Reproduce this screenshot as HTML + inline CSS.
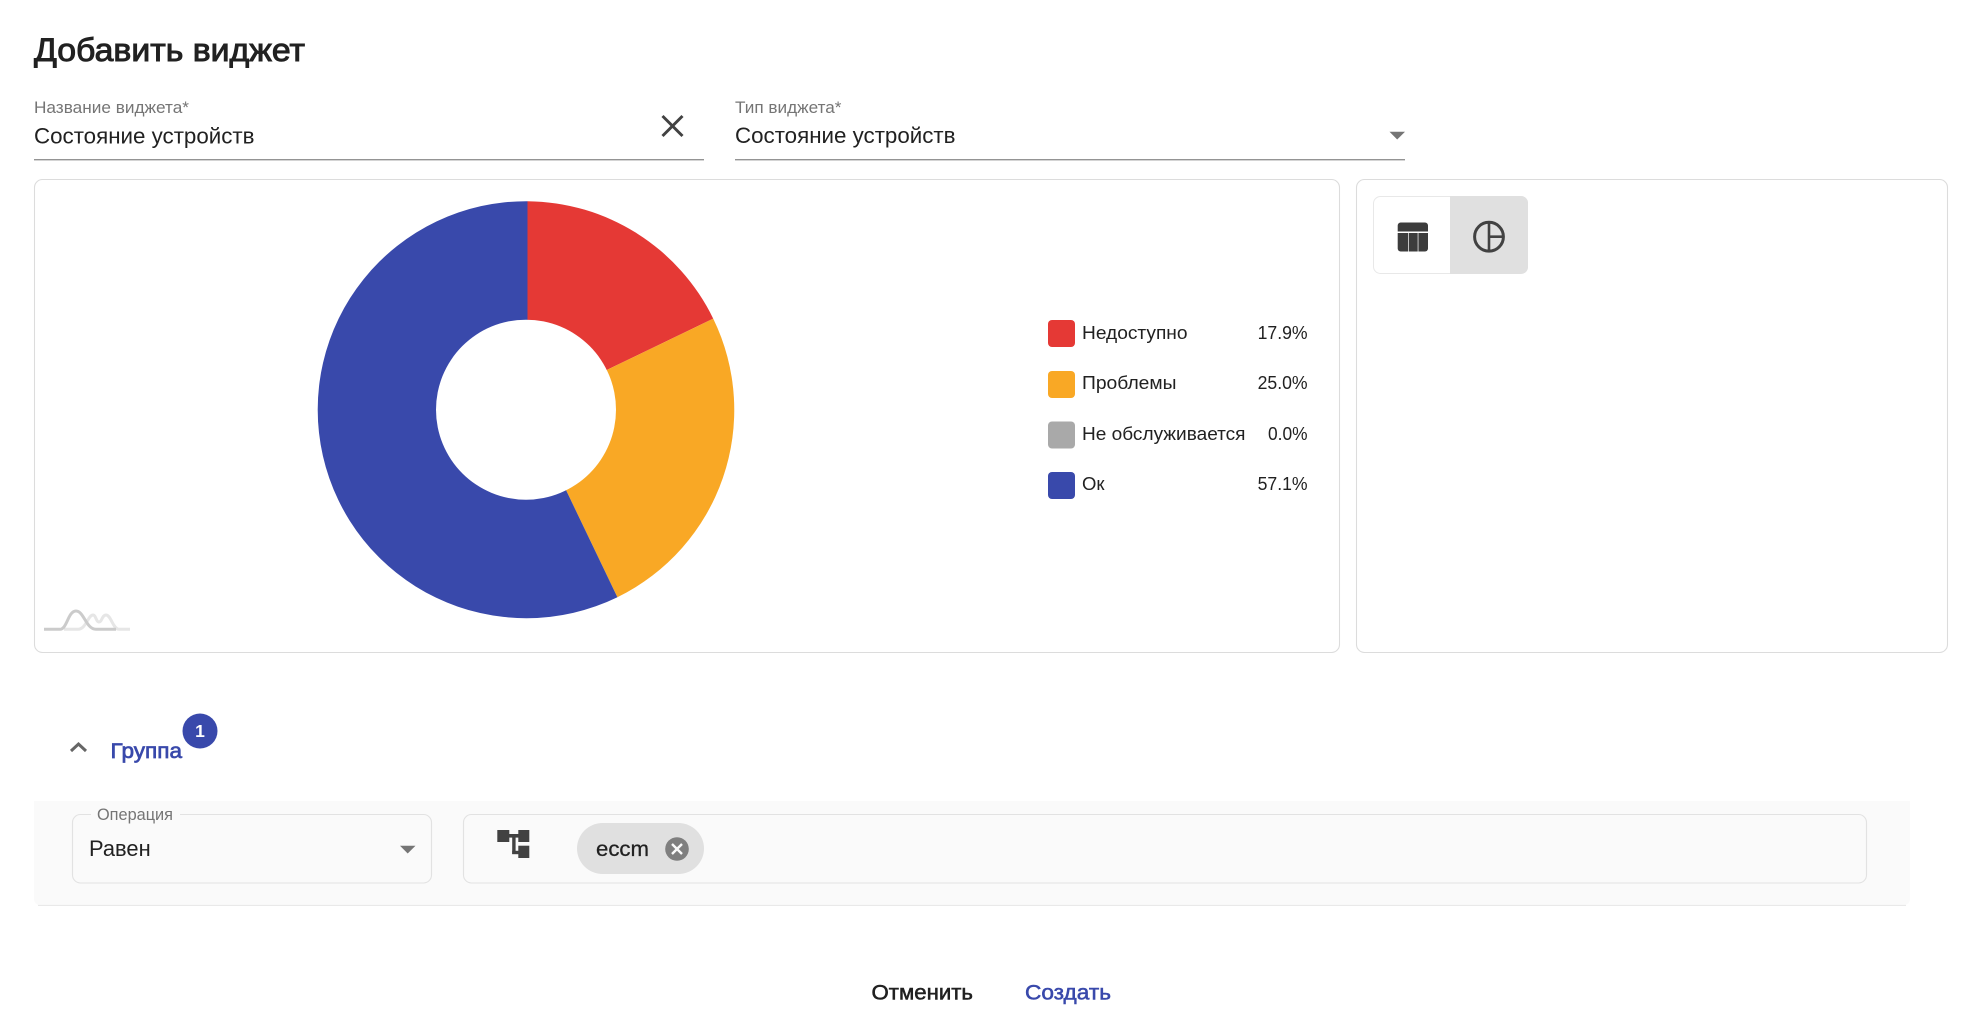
<!DOCTYPE html>
<html lang="ru">
<head>
<meta charset="utf-8">
<title>Добавить виджет</title>
<style>
html,body{margin:0;padding:0;background:#fff;width:1983px;height:1034px;overflow:hidden}
svg{display:block;position:absolute;left:0;top:0}
text{font-family:"Liberation Sans",sans-serif;white-space:pre}
</style>
</head>
<body>
<svg width="1983" height="1034" viewBox="0 0 1983 1034" xmlns="http://www.w3.org/2000/svg">
  <!-- Title -->
  <text x="34" y="61" font-size="32" fill="#212121" stroke="#212121" stroke-width=".95" textLength="271" lengthAdjust="spacingAndGlyphs">Добавить виджет</text>

  <!-- Name field -->
  <text x="34" y="113" font-size="16.5" fill="#757575" textLength="155" lengthAdjust="spacingAndGlyphs">Название виджета*</text>
  <text x="34" y="143.6" font-size="22" fill="#212121" textLength="220.5" lengthAdjust="spacingAndGlyphs">Состояние устройств</text>
  <path d="M662.5 116 L682.5 136 M682.5 116 L662.5 136" stroke="#424242" stroke-width="2.9" fill="none"/>
  <rect x="34" y="159" width="670" height="1.4" fill="#949494"/>

  <!-- Type field -->
  <text x="735" y="113" font-size="16.5" fill="#757575" textLength="106.5" lengthAdjust="spacingAndGlyphs">Тип виджета*</text>
  <text x="735" y="143" font-size="22" fill="#212121" textLength="220.5" lengthAdjust="spacingAndGlyphs">Состояние устройств</text>
  <path d="M1389.5 131.7 H1405 L1397.2 139.5 Z" fill="#757575"/>
  <rect x="735" y="159" width="670" height="1.4" fill="#949494"/>

  <!-- Chart panel -->
  <rect x="34.5" y="179.5" width="1305" height="473" rx="8" ry="8" fill="#fff" stroke="#dcdcdc" stroke-width="1.1"/>
  <path d="M527.5 201.2 A208.5 208.5 0 0 1 713.2 318.6 L607.2 369.8 L566.4 490.9 L527.5 409.7 Z" fill="#e53935"/>
  <path d="M713.2 318.6 A208.5 208.5 0 0 1 617.4 597.2 L566.4 490.9 L527.5 409.7 L607.2 369.8 Z" fill="#f9a825"/>
  <path d="M617.4 597.2 A208.5 208.5 0 1 1 527.5 201.2 L527.5 409.7 L566.4 490.9 Z" fill="#3949ab"/>
  <circle cx="526" cy="409.7" r="90" fill="#fff"/>

  <!-- Legend -->
  <rect x="1048" y="320" width="27" height="27" rx="4" fill="#e53935"/>
  <rect x="1048" y="371" width="27" height="27" rx="4" fill="#f9a825"/>
  <rect x="1048" y="421.5" width="27" height="27" rx="4" fill="#a9a9a9"/>
  <rect x="1048" y="472" width="27" height="27" rx="4" fill="#3949ab"/>
  <g font-size="18.5" fill="#212121">
    <text x="1082" y="339" textLength="105.5" lengthAdjust="spacingAndGlyphs">Недоступно</text>
    <text x="1082" y="389" textLength="94.5" lengthAdjust="spacingAndGlyphs">Проблемы</text>
    <text x="1082" y="440" textLength="163.5" lengthAdjust="spacingAndGlyphs">Не обслуживается</text>
    <text x="1082" y="490" textLength="22.5" lengthAdjust="spacingAndGlyphs">Ок</text>
    <text x="1257.6" y="339" textLength="50" lengthAdjust="spacingAndGlyphs">17.9%</text>
    <text x="1257.6" y="389" textLength="50" lengthAdjust="spacingAndGlyphs">25.0%</text>
    <text x="1268" y="440" textLength="39.5" lengthAdjust="spacingAndGlyphs">0.0%</text>
    <text x="1257.6" y="490" textLength="50" lengthAdjust="spacingAndGlyphs">57.1%</text>
  </g>

  <!-- Watermark -->
  <path d="M64 629.3 H78 C86 629.3 88 615 93 615 C96 615 96 622 99 622 C102 622 102 615 106 615 C111 615 113 629.3 119 629.3 H130" fill="none" stroke="#e6e6e6" stroke-width="3"/>
  <path d="M44 629.3 H60 C67 629.3 68 611 76 611 C84 611 86 629.3 96 629.3 H116" fill="none" stroke="#cbcbcb" stroke-width="3"/>

  <!-- Side panel -->
  <rect x="1356.5" y="179.5" width="591" height="473" rx="8" ry="8" fill="#fff" stroke="#dcdcdc" stroke-width="1.1"/>
  <rect x="1373.5" y="196.5" width="154" height="77" rx="7" fill="#fff" stroke="#e8e8e8" stroke-width="1"/>
  <path d="M1450 196 H1521 A7 7 0 0 1 1528 203 V267 A7 7 0 0 1 1521 274 H1450 Z" fill="#e0e0e0"/>
  <path d="M1400.7 222.5 H1425 A3 3 0 0 1 1428 225.5 V231.5 H1397.7 V225.5 A3 3 0 0 1 1400.7 222.5 Z" fill="#3c3c3c"/>
  <path d="M1397.7 233 H1408 V251.5 H1400.7 A3 3 0 0 1 1397.7 248.5 Z" fill="#3c3c3c"/>
  <rect x="1408.7" y="233" width="9" height="18.5" fill="#3c3c3c"/>
  <path d="M1418.4 233 H1428 V248.5 A3 3 0 0 1 1425 251.5 H1418.4 Z" fill="#3c3c3c"/>
  <circle cx="1489" cy="236.7" r="14.4" fill="none" stroke="#424242" stroke-width="3"/>
  <path d="M1489 222 V251.5 M1489 236.7 H1503" fill="none" stroke="#424242" stroke-width="2.6"/>

  <!-- Group header -->
  <path d="M71 751 L78.5 744 L86 751" fill="none" stroke="#666" stroke-width="3"/>
  <text x="110.5" y="758" font-size="21.5" fill="#3949ab" stroke="#3949ab" stroke-width=".7" textLength="71.5" lengthAdjust="spacingAndGlyphs">Группа</text>
  <circle cx="200" cy="731" r="17.5" fill="#3949ab"/>
  <text x="200" y="737" font-size="17.5" font-weight="bold" fill="#fff" text-anchor="middle">1</text>

  <!-- Group body -->
  <path d="M34 801 H1910 V899 A6 6 0 0 1 1904 905 H40 A6 6 0 0 1 34 899 Z" fill="#fafafa"/>
  <path d="M38 905.4 H1906" stroke="#e6e6e6" stroke-width="1"/>
  <rect x="72.5" y="814.5" width="359" height="68.5" rx="8" fill="#fafafa" stroke="#e2e2e2" stroke-width="1.1"/>
  <rect x="91" y="811" width="89" height="7" fill="#fafafa"/>
  <text x="97" y="820" font-size="16.5" fill="#757575" textLength="76" lengthAdjust="spacingAndGlyphs">Операция</text>
  <text x="89" y="856" font-size="22" fill="#212121" textLength="61.7" lengthAdjust="spacingAndGlyphs">Равен</text>
  <path d="M400 845.7 H415.5 L407.7 853.5 Z" fill="#757575"/>

  <rect x="463.5" y="814.5" width="1403" height="68.5" rx="8" fill="#fafafa" stroke="#e2e2e2" stroke-width="1.1"/>
  <!-- Tree icon -->
  <g fill="#424242">
    <rect x="497.3" y="830" width="12" height="12"/>
    <rect x="518.3" y="830" width="11" height="12"/>
    <rect x="518.3" y="845.7" width="11" height="12.3"/>
    <rect x="509" y="834" width="9.5" height="3.6"/>
    <rect x="512.2" y="836" width="3.4" height="18"/>
    <rect x="512.2" y="850.8" width="6.5" height="3.4"/>
  </g>
  <!-- Chip -->
  <rect x="577" y="823" width="127" height="51" rx="25.5" fill="#e0e0e0"/>
  <text x="596" y="856" font-size="21" fill="#212121" stroke="#212121" stroke-width=".25" textLength="53" lengthAdjust="spacingAndGlyphs">eccm</text>
  <circle cx="677" cy="849" r="11.8" fill="#7f7f7f"/>
  <path d="M672 844 L682 854 M682 844 L672 854" stroke="#fafafa" stroke-width="2.4" fill="none"/>

  <!-- Buttons -->
  <text x="871.5" y="999.6" font-size="21.5" fill="#212121" stroke="#212121" stroke-width=".55" textLength="101.5" lengthAdjust="spacingAndGlyphs">Отменить</text>
  <text x="1025" y="999.6" font-size="21.5" fill="#3949ab" stroke="#3949ab" stroke-width=".55" textLength="86" lengthAdjust="spacingAndGlyphs">Создать</text>
</svg>
</body>
</html>
